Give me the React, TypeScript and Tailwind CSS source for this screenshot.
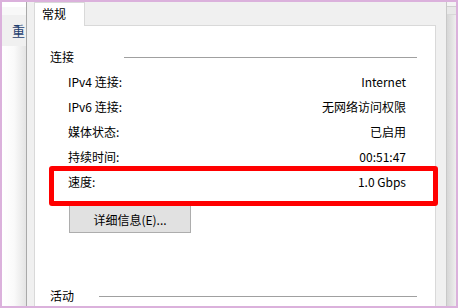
import React from "react";

const rows = [
  { label: "IPv4 连接:", value: "Internet" },
  { label: "IPv6 连接:", value: "无网络访问权限" },
  { label: "媒体状态:", value: "已启用" },
  { label: "持续时间:", value: "00:51:47" },
  { label: "速度:", value: "1.0 Gbps" },
];

const App = () => {
  return (
    <div className="relative h-[308px] w-[458px] overflow-hidden bg-[#dbb1dc] p-[2px] font-['Noto_Sans_CJK_SC',sans-serif] text-[12px] leading-[16px] text-black">
      <div className="flex h-full">
        {/* window behind the dialog */}
        <div className="flex w-[24px] flex-col bg-gradient-to-r from-white via-[#fafafa] to-[#e4e4e4]">
          <div className="h-[5px] bg-white" />
          <div className="h-[8px] bg-[#f8f8f8]" />
          <div className="flex h-[31px] items-center bg-[#f0f0f0] pl-[10px]">
            <span className="text-[13px] text-[#1f3f6f]">重</span>
          </div>
        </div>

        {/* dialog */}
        <div className="flex w-[420px] flex-col border-l border-[#a9a9a9] bg-[#f0f0f0] pl-[7px] pr-[10px]">
          <div className="flex">
            <div className="relative z-10 -mb-px flex h-[24px] w-[51px] items-center border-x border-t border-[#d9d9d9] bg-white pb-[2px] pl-[7px]">
              常规
            </div>
          </div>
          <div className="flex flex-1 flex-col border-x border-t border-[#d9d9d9] bg-white pl-[15px] pt-[23px]">
            <div className="flex h-[16px] items-center pr-[18px]">
              <span>连接</span>
              <div className="ml-[50px] h-px flex-1 bg-[#a0a0a0]" />
            </div>
            <div className="mt-[4px] flex flex-col pl-[18px] pr-[29px]">
              {rows.map((r) => (
                <div key={r.label} className="flex h-[25px] items-center justify-between">
                  <span>{r.label}</span>
                  <span>{r.value}</span>
                </div>
              ))}
            </div>
            <button className="ml-[19px] mt-[11px] flex h-[28px] w-[122px] items-center justify-center border border-[#adadad] bg-[#e1e1e1] pt-[1px]">
              详细信息(E)...
            </button>
            <div className="mt-[55px] flex h-[16px] items-center pr-[18px]">
              <span>活动</span>
              <div className="ml-[25px] h-px flex-1 bg-[#a0a0a0]" />
            </div>
          </div>
        </div>

        {/* right edge of the window behind */}
        <div className="flex w-[10px] flex-col border-l border-[#c8c8c8] bg-gradient-to-r from-[#d6d6d6] to-[#eeeeee]">
          <div className="h-[5px] border-b border-[#d0d0d0] bg-[#f4f4f4]" />
          <div className="h-[8px] border-b border-[#d8d8d8] bg-[#e8e8e8]" />
        </div>
      </div>

      {/* red annotation box */}
      <div className="absolute left-[49px] top-[166px] h-[40px] w-[389px] rounded-[3px] border-[5px] border-[#ff0000]" />
    </div>
  );
};

export default App;
